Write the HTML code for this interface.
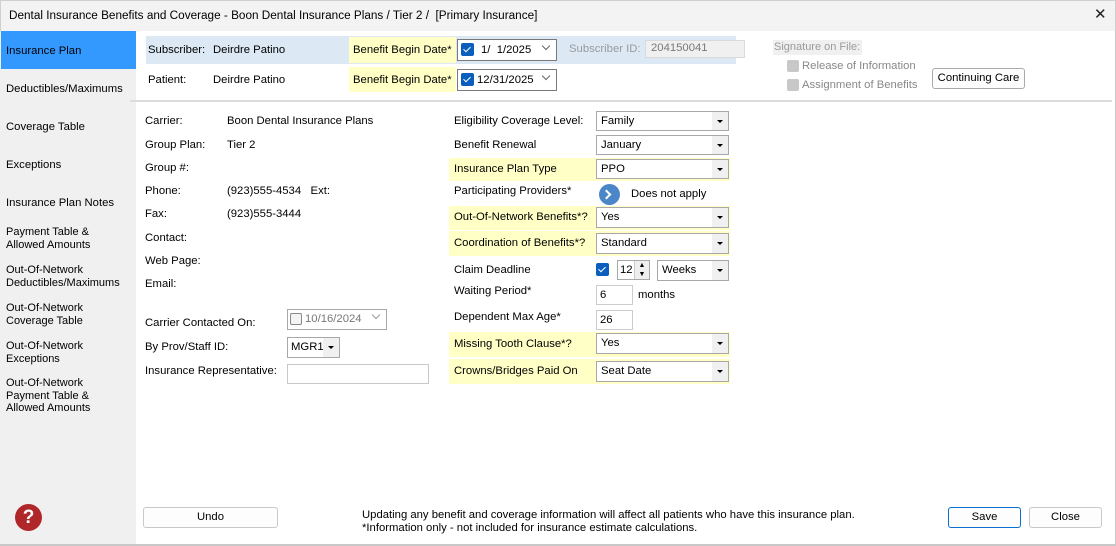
<!DOCTYPE html>
<html><head><meta charset="utf-8"><style>
*{box-sizing:border-box;margin:0;padding:0}
body{width:1116px;height:546px;overflow:hidden;background:#fff;font-family:"Liberation Sans",Arial,sans-serif;font-size:11.3px;color:#000;position:relative}
.a{position:absolute;white-space:nowrap}
.t{position:absolute;white-space:nowrap;line-height:16px}
.box{position:absolute;border:1px solid #a8a8a8;background:#fff}
.cb{position:absolute;border:1px solid #a8a8a8;background:#fff;padding-left:4px;line-height:19px}
.cb:after{content:"";position:absolute;right:0;top:0;bottom:0;width:16px;background:#f0f0f0}
.cb:before{content:"";position:absolute;right:5px;top:8px;border-left:3px solid transparent;border-right:3px solid transparent;border-top:3px solid #000;z-index:2}
.y{position:absolute;background:#ffffc6}
.btn{position:absolute;border:1px solid #c8c8c8;border-radius:3px;background:#fdfdfd;text-align:center;line-height:19px}
.chk{position:absolute;width:13px;height:13px;background:#0a5fbd;border-radius:2px}
.chk:after{content:"";position:absolute;left:4px;top:2px;width:3px;height:6px;border:solid #fff;border-width:0 1.5px 1.5px 0;transform:rotate(45deg)}
.dd{position:absolute;right:6px;top:5px;width:6px;height:6px;border:solid #666;border-width:0 1px 1px 0;transform:rotate(45deg)}
</style></head><body>
<div class="a" style="left:0;top:0;width:1116px;height:31px;background:#f3f3f3;border:1px solid #d0d0d0;border-bottom:none"></div>
<div class="t" style="left:9px;top:8px;font-size:11.75px">Dental Insurance Benefits and Coverage - Boon Dental Insurance Plans / Tier 2 /&nbsp; [Primary Insurance]</div>
<div class="t" style="left:1094px;top:7px;font-size:15px;font-weight:300;color:#222">✕</div>
<div class="a" style="left:0;top:31px;width:136px;height:515px;background:#f0f0f0"></div>
<div class="a" style="left:1115px;top:31px;width:1px;height:515px;background:#c8c8c8"></div>
<div class="a" style="left:0;top:544px;width:1116px;height:2px;background:#c8c8c8"></div>
<div class="a" style="left:1px;top:31px;width:135px;height:38px;background:#3399ff"></div>
<div class="t" style="left:6px;top:43px">Insurance Plan</div>
<div class="t" style="left:6px;top:81px">Deductibles/Maximums</div>
<div class="t" style="left:6px;top:119px">Coverage Table</div>
<div class="t" style="left:6px;top:157px">Exceptions</div>
<div class="t" style="left:6px;top:195px">Insurance Plan Notes</div>
<div class="t" style="left:6px;top:226px;line-height:12.5px;font-size:11px">Payment Table &amp;<br>Allowed Amounts</div>
<div class="t" style="left:6px;top:264px;line-height:12.5px;font-size:11px">Out-Of-Network<br>Deductibles/Maximums</div>
<div class="t" style="left:6px;top:302px;line-height:12.5px;font-size:11px">Out-Of-Network<br>Coverage Table</div>
<div class="t" style="left:6px;top:340px;line-height:12.5px;font-size:11px">Out-Of-Network<br>Exceptions</div>
<div class="t" style="left:6px;top:377px;line-height:12.5px;font-size:11px">Out-Of-Network<br>Payment Table &amp;<br>Allowed Amounts</div>
<div class="a" style="left:15px;top:504px;width:27px;height:27px;border-radius:50%;background:#b0272a;color:#fff;font-weight:bold;font-size:19px;text-align:center;line-height:27px">?</div>

<div class="a" style="left:146px;top:36px;width:590px;height:28px;background:#dce9f5"></div>
<div class="t" style="left:148px;top:42px">Subscriber:</div>
<div class="t" style="left:213px;top:42px">Deirdre Patino</div>
<div class="y" style="left:349px;top:37px;width:107px;height:26px"></div>
<div class="t" style="left:353px;top:42px">Benefit Begin Date*</div>
<div class="box" style="left:457px;top:39px;width:100px;height:22px;border-color:#7a7a7a"></div>
<div class="chk" style="left:461px;top:43px"></div>
<div class="t" style="left:481px;top:42px">1/&nbsp; 1/2025</div>
<div class="dd" style="left:543px;top:43px"></div>
<div class="t" style="left:569px;top:41px;color:#9a9a9a">Subscriber ID:</div>
<div class="a" style="left:645px;top:40px;width:100px;height:18px;background:#f0f0f0;border:1px solid #dadada;color:#777;padding-left:5px;line-height:15px">204150041</div>

<div class="t" style="left:148px;top:72px">Patient:</div>
<div class="t" style="left:213px;top:72px">Deirdre Patino</div>
<div class="y" style="left:349px;top:67px;width:107px;height:25px"></div>
<div class="t" style="left:353px;top:72px">Benefit Begin Date*</div>
<div class="box" style="left:457px;top:69px;width:100px;height:22px;border-color:#7a7a7a"></div>
<div class="chk" style="left:461px;top:73px"></div>
<div class="t" style="left:477px;top:72px">12/31/2025</div>
<div class="dd" style="left:543px;top:73px"></div>

<div class="a" style="left:773px;top:40px;width:89px;height:15px;background:#f0f0f0"></div>
<div class="t" style="left:774px;top:39px;color:#9a9a9a;font-size:11px">Signature on File:</div>
<div class="a" style="left:787px;top:60px;width:12px;height:12px;background:#c8c8c8;border-radius:2px"></div>
<div class="t" style="left:802px;top:58px;color:#888">Release of Information</div>
<div class="a" style="left:787px;top:79px;width:12px;height:12px;background:#c8c8c8;border-radius:2px"></div>
<div class="t" style="left:802px;top:77px;color:#888">Assignment of Benefits</div>
<div class="btn" style="left:932px;top:68px;width:93px;height:21px;border-color:#aaa">Continuing Care</div>

<div class="a" style="left:130px;top:100px;width:982px;height:2px;background:#dcdcdc"></div>

<div class="t" style="left:145px;top:113px">Carrier:</div><div class="t" style="left:227px;top:113px">Boon Dental Insurance Plans</div>
<div class="t" style="left:145px;top:137px">Group Plan:</div><div class="t" style="left:227px;top:137px">Tier 2</div>
<div class="t" style="left:145px;top:160px">Group #:</div>
<div class="t" style="left:145px;top:183px">Phone:</div><div class="t" style="left:227px;top:183px">(923)555-4534&nbsp;&nbsp; Ext:</div>
<div class="t" style="left:145px;top:206px">Fax:</div><div class="t" style="left:227px;top:206px">(923)555-3444</div>
<div class="t" style="left:145px;top:230px">Contact:</div>
<div class="t" style="left:145px;top:253px">Web Page:</div>
<div class="t" style="left:145px;top:276px">Email:</div>
<div class="t" style="left:145px;top:315px">Carrier Contacted On:</div>
<div class="box" style="left:287px;top:309px;width:100px;height:21px"></div>
<div class="a" style="left:290px;top:313px;width:12px;height:12px;border:1px solid #888;border-radius:2px;background:#f4f4f4"></div>
<div class="t" style="left:305px;top:311px;color:#777">10/16/2024</div>
<div class="dd" style="left:373px;top:312px;border-color:#999"></div>
<div class="t" style="left:145px;top:339px">By Prov/Staff ID:</div>
<div class="cb" style="left:287px;top:337px;width:53px;height:21px;padding-left:3px">MGR1</div>
<div class="t" style="left:145px;top:363px">Insurance Representative:</div>
<div class="box" style="left:287px;top:364px;width:142px;height:20px;border-color:#c8c8c8"></div>

<div class="y" style="left:449px;top:158px;width:281px;height:23px"></div>
<div class="y" style="left:449px;top:206px;width:281px;height:24px"></div>
<div class="y" style="left:449px;top:231px;width:281px;height:25px"></div>
<div class="y" style="left:449px;top:332px;width:281px;height:25px"></div>
<div class="y" style="left:449px;top:359px;width:281px;height:25px"></div>
<div class="t" style="left:454px;top:113px">Eligibility Coverage Level:</div>
<div class="cb" style="left:596px;top:111px;width:133px;height:20px">Family</div>
<div class="t" style="left:454px;top:137px">Benefit Renewal</div>
<div class="cb" style="left:596px;top:135px;width:133px;height:20px">January</div>
<div class="t" style="left:454px;top:161px">Insurance Plan Type</div>
<div class="cb" style="left:596px;top:159px;width:133px;height:20px">PPO</div>
<div class="t" style="left:454px;top:183px">Participating Providers*</div>
<div class="a" style="left:599px;top:184px;width:21px;height:21px;border-radius:50%;background:#4a86c8"></div>
<div class="a" style="left:604px;top:189px;width:7px;height:7px;border:solid #fff;border-width:2.5px 2.5px 0 0;transform:translate(-1px,2px) rotate(45deg)"></div>
<div class="t" style="left:631px;top:186px">Does not apply</div>
<div class="t" style="left:454px;top:209px">Out-Of-Network Benefits*?</div>
<div class="cb" style="left:596px;top:207px;width:133px;height:21px">Yes</div>
<div class="t" style="left:454px;top:235px">Coordination of Benefits*?</div>
<div class="cb" style="left:596px;top:233px;width:133px;height:21px">Standard</div>
<div class="t" style="left:454px;top:262px">Claim Deadline</div>
<div class="chk" style="left:596px;top:263px"></div>
<div class="box" style="left:617px;top:260px;width:33px;height:20px;padding-left:2px;line-height:18px">12</div>
<div class="a" style="left:634px;top:261px;width:15px;height:18px;background:#eee;border-left:1px solid #ccc;font-size:7px;line-height:9px;text-align:center">▲<br>▼</div>
<div class="cb" style="left:657px;top:260px;width:72px;height:21px">Weeks</div>
<div class="t" style="left:454px;top:283px">Waiting Period*</div>
<div class="box" style="left:596px;top:285px;width:37px;height:20px;padding-left:3px;line-height:19px;border-color:#ccc">6</div>
<div class="t" style="left:638px;top:287px">months</div>
<div class="t" style="left:454px;top:309px">Dependent Max Age*</div>
<div class="box" style="left:596px;top:310px;width:37px;height:20px;padding-left:3px;line-height:19px;border-color:#ccc">26</div>
<div class="t" style="left:454px;top:336px">Missing Tooth Clause*?</div>
<div class="cb" style="left:596px;top:333px;width:133px;height:21px">Yes</div>
<div class="t" style="left:454px;top:363px">Crowns/Bridges Paid On</div>
<div class="cb" style="left:596px;top:361px;width:133px;height:21px">Seat Date</div>

<div class="btn" style="left:143px;top:507px;width:135px;height:21px">Undo</div>
<div class="t" style="left:362px;top:507px">Updating any benefit and coverage information will affect all patients who have this insurance plan.</div>
<div class="t" style="left:362px;top:520px">*Information only - not included for insurance estimate calculations.</div>
<div class="btn" style="left:948px;top:507px;width:73px;height:21px;border-color:#0a6fd0">Save</div>
<div class="btn" style="left:1029px;top:507px;width:73px;height:21px">Close</div>
</body></html>
